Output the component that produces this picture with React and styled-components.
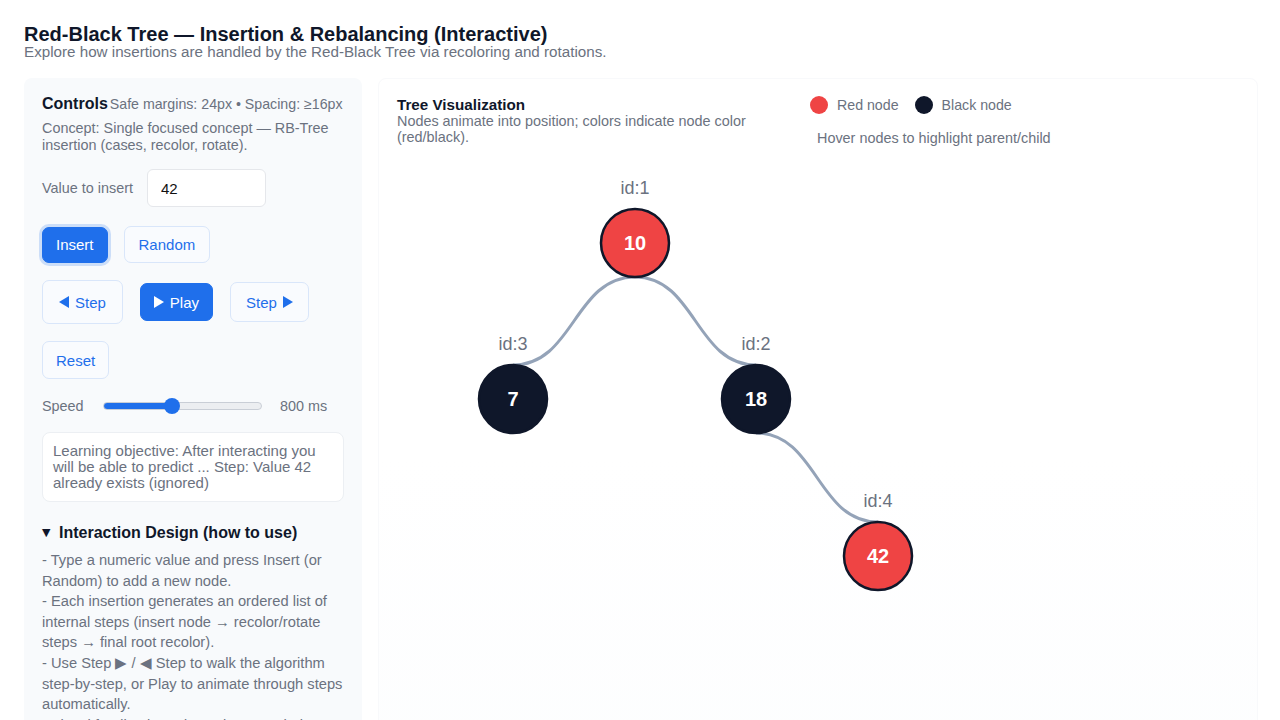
import React, { useState } from 'react'
import styled, { createGlobalStyle } from 'styled-components'

const colours = {
  ink: '#0f172a',
  muted: '#6b7280',
  blue: '#1f6feb',
  red: '#ef4444',
  edge: '#94a3b8',
  panel: '#f8fafc',
  line: '#e5e7eb',
}

const GlobalStyle = createGlobalStyle`
  html, body {
    margin: 0;
    background: #ffffff;
    overflow: hidden;
  }
  body {
    font-family: "Liberation Sans", Arial, Helvetica, sans-serif;
    color: ${colours.ink};
  }
  * { box-sizing: border-box; }
`

// tree data: positions are in svg coordinates
const NODES = [
  { id: 1, value: 10, color: 'red', x: 238, y: 82 },
  { id: 3, value: 7, color: 'black', x: 116, y: 238 },
  { id: 2, value: 18, color: 'black', x: 359, y: 238 },
  { id: 4, value: 42, color: 'red', x: 481, y: 395 },
]
const EDGES = [[1, 3], [1, 2], [2, 4]]
const R = 34

const Triangle = ({ dir }) => (
  <svg width="10" height="12" viewBox="0 0 10 12" aria-hidden="true">
    {dir === 'left'
      ? <path d="M10 0 L10 12 L0 6 Z" fill="currentColor" />
      : <path d="M0 0 L0 12 L10 6 Z" fill="currentColor" />}
  </svg>
)

function linkPath(a, b) {
  const x0 = a.x, y0 = a.y + R
  const x1 = b.x, y1 = b.y - R
  const mx = (x0 + x1) / 2
  return `M${x0},${y0} C${mx},${y0} ${mx},${y1} ${x1},${y1}`
}

export default function App() {
  const [value, setValue] = useState('42')
  const [speed, setSpeed] = useState(800)
  const min = 200
  const max = 1600
  const pct = ((speed - min) / (max - min)) * 100
  const byId = Object.fromEntries(NODES.map(n => [n.id, n]))

  return (
    <Page>
      <GlobalStyle />
      <Header>
        <Title>Red-Black Tree — Insertion &amp; Rebalancing (Interactive)</Title>
        <Subtitle>Explore how insertions are handled by the Red-Black Tree via recoloring and rotations.</Subtitle>
      </Header>

      <Main>
        <Sidebar>
          <ControlsHead>
            <ControlsTitle>Controls</ControlsTitle>
            <ControlsMeta>Safe margins: 24px • Spacing: ≥16px</ControlsMeta>
          </ControlsHead>
          <Concept>Concept: Single focused concept — RB-Tree insertion (cases, recolor, rotate).</Concept>

          <ValueRow>
            <Label htmlFor="val">Value to insert</Label>
            <ValueInput id="val" value={value} onChange={e => setValue(e.target.value)} />
          </ValueRow>

          <ButtonRow $top={19}>
            <Button $primary $focused $h={36}>Insert</Button>
            <Button $h={37} $pad={14}>Random</Button>
          </ButtonRow>

          <ButtonRow $top={17} $gap={17}>
            <Button $h={44} $pad={16}><Triangle dir="left" /> Step</Button>
            <Button $primary $h={38} $pad={13}><Triangle dir="right" /> Play</Button>
            <Button $h={40} $pad={15}>Step <Triangle dir="right" /></Button>
          </ButtonRow>

          <ButtonRow $top={17}>
            <Button $h={38}>Reset</Button>
          </ButtonRow>

          <SpeedRow>
            <SpeedLabel>Speed</SpeedLabel>
            <Slider
              type="range"
              min={min}
              max={max}
              value={speed}
              onChange={e => setSpeed(Number(e.target.value))}
              style={{ background: `linear-gradient(to right, ${colours.blue} ${pct}%, #eceef1 ${pct}%)` }}
            />
            <SpeedValue>{speed} ms</SpeedValue>
          </SpeedRow>

          <Objective>
            Learning objective: After interacting you will be able to predict ... Step: Value 42 already exists (ignored)
          </Objective>

          <Details open>
            <Summary><Caret>▼</Caret>Interaction Design (how to use)</Summary>
            <HelpLine>- Type a numeric value and press Insert (or Random) to add a new node.</HelpLine>
            <HelpLine>- Each insertion generates an ordered list of internal steps (insert node → recolor/rotate steps → final root recolor).</HelpLine>
            <HelpLine>- Use Step ▶ / ◀ Step to walk the algorithm step-by-step, or Play to animate through steps automatically.</HelpLine>
            <HelpLine>- Visual feedback: nodes animate to their new positions and colors update after each step.</HelpLine>
          </Details>
        </Sidebar>

        <VizPanel>
          <VizHeader>
            <VizIntro>
              <VizTitle>Tree Visualization</VizTitle>
              <VizText>Nodes animate into position; colors indicate node color (red/black).</VizText>
            </VizIntro>
            <LegendBlock>
              <Legend>
                <LegendItem><Dot $color={colours.red} />Red node</LegendItem>
                <LegendItem><Dot $color={colours.ink} />Black node</LegendItem>
              </Legend>
              <Hint>Hover nodes to highlight parent/child</Hint>
            </LegendBlock>
          </VizHeader>

          <TreeSvg width="842" height="560" viewBox="0 0 842 560">
            {EDGES.map(([p, c]) => (
              <path key={`${p}-${c}`} d={linkPath(byId[p], byId[c])} fill="none" stroke={colours.edge} strokeWidth="3" />
            ))}
            {NODES.map(n => (
              <g key={n.id}>
                <NodeId x={n.x} y={n.y - R - 15} textAnchor="middle">id:{n.id}</NodeId>
                <circle cx={n.x} cy={n.y} r={R} fill={n.color === 'red' ? colours.red : colours.ink} stroke={colours.ink} strokeWidth="2.5" />
                <NodeValue x={n.x} y={n.y + 7} textAnchor="middle">{n.value}</NodeValue>
              </g>
            ))}
          </TreeSvg>
        </VizPanel>
      </Main>
    </Page>
  )
}

const Page = styled.div`
  padding: 24px;
`

const Header = styled.header`
  margin-bottom: 18px;
`

const Title = styled.h1`
  margin: 0;
  font-size: 20px;
  line-height: 20px;
  font-weight: 700;
  color: ${colours.ink};
`

const Subtitle = styled.p`
  margin: 0;
  font-size: 15.2px;
  line-height: 16px;
  color: ${colours.muted};
`

const Main = styled.main`
  display: flex;
  gap: 16px;
  align-items: stretch;
  min-height: 760px;
`

const Sidebar = styled.aside`
  flex: 0 0 338px;
  display: flex;
  flex-direction: column;
  padding: 16px 18px 24px;
  background: ${colours.panel};
  border-radius: 8px;
`

const ControlsHead = styled.div`
  display: flex;
  align-items: baseline;
  gap: 2px;
  line-height: 20px;
  white-space: nowrap;
`

const ControlsTitle = styled.span`
  font-size: 16px;
  font-weight: 700;
  color: ${colours.ink};
`

const ControlsMeta = styled.span`
  font-size: 14.2px;
  color: ${colours.muted};
`

const Concept = styled.p`
  margin: 6px 0 0;
  font-size: 14.4px;
  line-height: 17px;
  color: ${colours.muted};
`

const ValueRow = styled.div`
  display: flex;
  align-items: center;
  gap: 14px;
  margin-top: 15px;
`

const Label = styled.label`
  font-size: 14.4px;
  color: ${colours.muted};
`

const ValueInput = styled.input`
  width: 119px;
  height: 38px;
  padding: 0 13px;
  border: 1px solid ${colours.line};
  border-radius: 6px;
  background: #fff;
  font-family: inherit;
  font-size: 15px;
  color: #111;
  outline: none;
`

const ButtonRow = styled.div`
  display: flex;
  align-items: center;
  gap: ${p => p.$gap || 16}px;
  margin-top: ${p => p.$top}px;
`

const Button = styled.button`
  display: inline-flex;
  align-items: center;
  gap: 6px;
  height: ${p => p.$h}px;
  padding: 0 ${p => p.$pad || 13}px;
  border-radius: 7px;
  font-family: inherit;
  font-size: 15px;
  cursor: pointer;
  border: 1px solid ${p => (p.$primary ? colours.blue : '#d9e6fa')};
  background: ${p => (p.$primary ? colours.blue : '#f9fbfe')};
  color: ${p => (p.$primary ? '#fff' : colours.blue)};
  box-shadow: ${p => (p.$focused ? '0 0 0 3px rgba(31, 111, 235, 0.2)' : 'none')};
`

const SpeedRow = styled.div`
  display: flex;
  align-items: center;
  gap: 18px;
  margin-top: 18px;
  height: 18px;
  font-size: 14.4px;
  color: ${colours.muted};
`

const SpeedLabel = styled.span`
  width: 43px;
`

const SpeedValue = styled.span`
  white-space: nowrap;
`

const Slider = styled.input`
  -webkit-appearance: none;
  appearance: none;
  width: 159px;
  height: 8px;
  margin: 0;
  border-radius: 4px;
  border: 1px solid #c9ced6;
  outline: none;

  &::-webkit-slider-thumb {
    -webkit-appearance: none;
    width: 16px;
    height: 16px;
    border-radius: 50%;
    background: ${colours.blue};
    border: none;
  }
`

const Objective = styled.div`
  margin-top: 17px;
  padding: 10px;
  background: #fff;
  border: 1px solid #eceff3;
  border-radius: 8px;
  font-size: 15px;
  line-height: 16px;
  color: ${colours.muted};
`

const Details = styled.details`
  margin-top: 21px;
`

const Summary = styled.summary`
  list-style: none;
  display: flex;
  align-items: center;
  font-size: 16px;
  line-height: 20px;
  font-weight: 700;
  color: ${colours.ink};
  margin-bottom: 7px;
  cursor: pointer;

  &::-webkit-details-marker { display: none; }
`

const Caret = styled.span`
  font-size: 11px;
  width: 17px;
  font-family: "DejaVu Sans", sans-serif;
`

const HelpLine = styled.div`
  font-size: 14.7px;
  line-height: 20.6px;
  color: ${colours.muted};
`

const VizPanel = styled.section`
  flex: 1;
  display: flex;
  flex-direction: column;
  padding: 18px;
  border: 1px solid #f8f9fb;
  border-radius: 8px;
  background: linear-gradient(180deg, #ffffff 0%, #ffffff 50%, #fcfdfe 100%);
`

const VizHeader = styled.div`
  display: flex;
  gap: 13px;
`

const VizIntro = styled.div`
  flex: 0 0 400px;
`

const VizTitle = styled.div`
  font-size: 15.2px;
  line-height: 16px;
  font-weight: 700;
  color: ${colours.ink};
`

const VizText = styled.div`
  max-width: 360px;
  font-size: 14.4px;
  line-height: 16px;
  color: ${colours.muted};
`

const LegendBlock = styled.div`
  display: flex;
  flex-direction: column;
`

const Legend = styled.div`
  display: flex;
  align-items: center;
  gap: 16px;
  margin-top: -1px;
`

const LegendItem = styled.span`
  display: inline-flex;
  align-items: center;
  gap: 9px;
  font-size: 14.2px;
  color: ${colours.muted};
`

const Dot = styled.span`
  width: 18px;
  height: 18px;
  border-radius: 50%;
  background: ${p => p.$color};
`

const Hint = styled.div`
  margin-top: 16px;
  padding-left: 7px;
  font-size: 14.4px;
  line-height: 16px;
  color: ${colours.muted};
`

const TreeSvg = styled.svg`
  display: block;
  margin-top: 15px;
  overflow: visible;
`

const NodeId = styled.text`
  font-family: "Liberation Sans", Arial, sans-serif;
  font-size: 18px;
  fill: ${colours.muted};
`

const NodeValue = styled.text`
  font-family: "Liberation Sans", Arial, sans-serif;
  font-size: 20px;
  font-weight: 700;
  fill: #fff;
`
